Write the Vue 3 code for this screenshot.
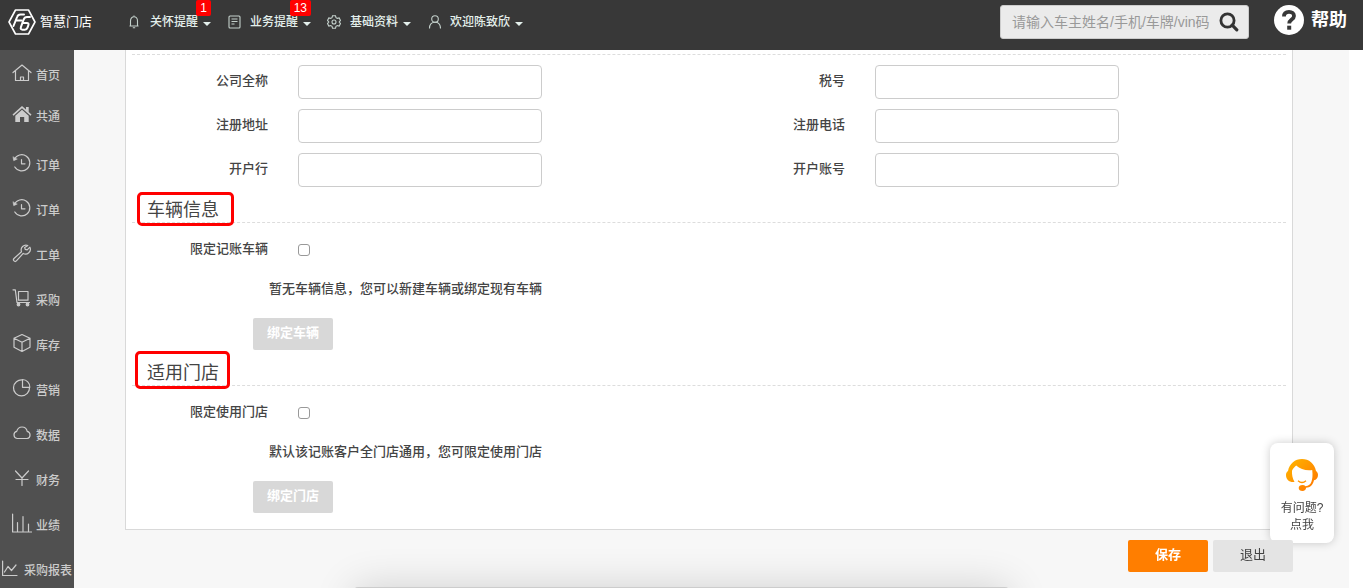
<script setup>
import { ref } from 'vue'

const navItems = [
  { icon: 'bell', label: '关怀提醒', badge: '1' },
  { icon: 'doc', label: '业务提醒', badge: '13' },
  { icon: 'gear', label: '基础资料' },
  { icon: 'user', label: '欢迎陈致欣' },
]

const menu = [
  { icon: 'home', label: '首页', compact: true },
  { icon: 'homeSolid', label: '共通', compact: true, last: true },
  { icon: 'clock', label: '订单' },
  { icon: 'clock', label: '订单' },
  { icon: 'wrench', label: '工单' },
  { icon: 'cart', label: '采购' },
  { icon: 'box', label: '库存' },
  { icon: 'pie', label: '营销' },
  { icon: 'cloud', label: '数据' },
  { icon: 'yen', label: '财务' },
  { icon: 'bars', label: '业绩' },
  { icon: 'chart', label: '采购报表' },
]

const fields = ref([
  { id: 'company', label: '公司全称', value: '' },
  { id: 'tax', label: '税号', value: '' },
  { id: 'address', label: '注册地址', value: '' },
  { id: 'phone', label: '注册电话', value: '' },
  { id: 'bank', label: '开户行', value: '' },
  { id: 'account', label: '开户账号', value: '' },
])

const sections = ref([
  { id: 'vehicle', title: '车辆信息', limit: '限定记账车辆', checked: false, hint: '暂无车辆信息，您可以新建车辆或绑定现有车辆', action: '绑定车辆' },
  { id: 'store', title: '适用门店', limit: '限定使用门店', checked: false, hint: '默认该记账客户全门店通用，您可限定使用门店', action: '绑定门店' },
])

const keyword = ref('')
</script>

<template>
  <div class="app">
    <header class="topbar">
      <a class="logo" href="#">
        <svg width="28" height="26" viewBox="0 0 28 26" fill="none" stroke="#fff" stroke-linejoin="round" stroke-linecap="round">
          <path d="M7.500 1h13L27 13l-6.500 12h-13L1 13z" stroke-width="1.600" />
          <path d="M16 5.500h-3.500q-2.500 0-3.400 2.500L5.500 17M8 11.500h5.500" stroke-width="2" />
          <path d="M22 8h-3q-2.500 0-3.500 2.800l-2.600 7.400q-.8 2.500 1.600 2.500h2.300q2 0 2.700-2l.9-2.500q.7-2.200-1.500-2.200H15" stroke-width="2" />
        </svg>
        <span>智慧门店</span>
      </a>
      <nav class="nav">
        <a v-for="item in navItems" :key="item.label" class="nav-item" href="#">
          <svg class="nav-icon" width="14" height="14" viewBox="0 0 14 14" fill="none" stroke="currentColor" stroke-width="1.100">
            <path v-if="item.icon === 'bell'" d="M7 .5v1M2.500 11h9M3.500 11V6a3.500 4.300 0 0 1 7 0v5M5.800 12.700h2.400" />
            <template v-else-if="item.icon === 'doc'">
              <rect x="2" y="1" width="11" height="12" rx="1" />
              <path d="M4.500 4h6M4.500 6.500h6M4.500 9h3" />
            </template>
            <template v-else-if="item.icon === 'gear'">
              <path d="M5.500.8h3l.5 1.900 1.300.7 1.900-.5 1.300 2.500L12.200 7l1.300 1.600-1.300 2.500-1.900-.5-1.300.7-.5 1.900h-3L5 11.300l-1.300-.7-1.900.5L.5 8.600 1.800 7 .5 5.400l1.300-2.500 1.900.5L5 2.700z" />
              <circle cx="7" cy="7" r="2" />
            </template>
            <template v-else>
              <circle cx="8" cy="4" r="3.300" />
              <path d="M2.500 13.500c0-3.800 2.200-6.200 5.500-6.200s5.500 2.400 5.500 6.200" />
            </template>
          </svg>
          <span class="nav-label">{{ item.label }}</span>
          <i class="caret"></i>
          <b v-if="item.badge" class="badge">{{ item.badge }}</b>
        </a>
      </nav>
      <form class="search" role="search" @submit.prevent>
        <input v-model="keyword" type="text" aria-label="搜索" placeholder="请输入车主姓名/手机/车牌/vin码" />
        <button type="submit" aria-label="搜索">
          <svg width="20" height="20" viewBox="0 0 20 20" fill="none" stroke="#333" stroke-width="2.800">
            <circle cx="8.500" cy="8.500" r="6.600" />
            <path d="M13.200 13.200l4.600 4.600" stroke-width="3.200" stroke-linecap="round" />
          </svg>
        </button>
      </form>
      <a class="help" href="#">
        <svg width="30" height="30" viewBox="0 0 30 30">
          <circle cx="15" cy="15" r="15" fill="#fff" />
          <path d="M10 11.500c0-3 2-4.700 5-4.700s5 1.700 5 4.200c0 3.500-4.800 3.600-4.800 7.500" fill="none" stroke="#383838" stroke-width="3.800" />
          <rect x="13.200" y="20.700" width="4" height="4" fill="#383838" />
        </svg>
        <span>帮助</span>
      </a>
    </header>

    <div class="body">
      <aside class="sidebar">
        <a v-for="(item, i) in menu" :key="i" href="#" class="menu-item" :class="{ compact: item.compact, last: item.last }">
          <svg width="20" height="20" viewBox="0 0 20 20" fill="none" stroke="currentColor" stroke-width="1.200" stroke-linejoin="round" stroke-linecap="round">
            <path v-if="item.icon === 'home'" d="M1 9.500L10 2l9 7.500M3.500 8v9.500h13V8M8.500 17.500V14h3v3.500" />
            <g v-else-if="item.icon === 'homeSolid'" fill="currentColor" stroke="none">
              <path d="M10 2l4 3.500V3h2.700v5L19.500 10.500l-1 1.200L10 4.300l-8.500 7.400-1-1.200z" />
              <path d="M10 5.800l6.700 5.900V18h-4.500v-5H8v5H3.300v-6.300z" />
            </g>
            <g v-else-if="item.icon === 'clock'">
              <path d="M2.300 6.500A8.100 8.100 0 1 1 2.800 14M9.500 6.500v4.300H13" />
              <path d="M1 4l.7 3.700 3.300-1.500z" fill="currentColor" stroke-width=".5" />
            </g>
            <path v-else-if="item.icon === 'wrench'" d="M15.800 2.500a4.800 4.800 0 0 0-6.300 6.200L2 15.500a1.600 1.600 0 0 0 2.400 2.400l6.800-7.500a4.800 4.800 0 0 0 6.700-6.200l-2.700 2.700-2-.5-.5-1.900z" />
            <g v-else-if="item.icon === 'cart'">
              <path d="M1 1.800h2.300L5 14.500h12.500M6.500 3.500H16v8.700H6.500z" />
              <circle cx="6.500" cy="16.500" r="1.300" fill="currentColor" />
              <circle cx="15.500" cy="16.500" r="1.300" fill="currentColor" />
            </g>
            <path v-else-if="item.icon === 'box'" d="M10 1.500l8 3.700v9L10 18.500l-8-4.300v-9zM2 5.200l8 4 8-4M10 9.200v9.300" />
            <g v-else-if="item.icon === 'pie'">
              <path d="M10.500 2A8 8 0 1 0 17.500 9.500M10.500 1.500v7.800h7.300a7.500 7.500 0 0 0-7.300-7.800" />
            </g>
            <path v-else-if="item.icon === 'cloud'" d="M5 15.500a3.700 3.700 0 0 1-.3-7.200C5.500 5.500 7.500 4 10 4s4.700 1.700 5.200 4.300a3.700 3.700 0 0 1 0 7.200z" />
            <path v-else-if="item.icon === 'yen'" d="M3.500 3l6.500 7 6.500-7M4 11.500h12M10 10v7.500" />
            <path v-else-if="item.icon === 'bars'" d="M.6 1v18h19M5.500 18V9.500M11 18V3.500M16.500 18v-7" />
            <path v-else d="M2.600 3v14.500H17M4.500 14l3.500-5.500 3.500 4L16 7" />
          </svg>
          <span>{{ item.label }}</span>
        </a>
      </aside>

      <main class="main">
        <section class="panel">
          <div class="fields">
            <div v-for="field in fields" :key="field.id" class="field">
              <label :for="field.id">{{ field.label }}</label>
              <input :id="field.id" v-model="field.value" type="text" />
            </div>
          </div>
          <div v-for="section in sections" :key="section.id" class="section">
            <h2 :class="section.id">{{ section.title }}</h2>
            <div class="limit">
              <label :for="section.id">{{ section.limit }}</label>
              <input :id="section.id" v-model="section.checked" type="checkbox" />
            </div>
            <p>{{ section.hint }}</p>
            <button type="button" class="bind" disabled>{{ section.action }}</button>
          </div>
        </section>
        <div class="actions">
          <button type="button" class="save">保存</button>
          <button type="button" class="exit">退出</button>
        </div>
      </main>
    </div>

    <a class="service" href="#">
      <svg width="34" height="34" viewBox="0 0 34 34">
        <defs>
          <linearGradient id="service-fill" x1="0" y1="0" x2="1" y2="1">
            <stop offset="0" stop-color="#ffb800" />
            <stop offset="1" stop-color="#ff7200" />
          </linearGradient>
        </defs>
        <path fill="url(#service-fill)" d="M3 13C4.500 5.500 10 1 17 1s12.500 4.500 14 12c1.300 1 2 2.400 2 4 0 2.700-1.700 4.800-4 5.300-1.500 5.500-4 7.200-8 7.500.2 2-1.500 3.200-3.500 3.200-2.300 0-3.800-1.200-3.800-3s1.500-3 3.800-3c1.300 0 2.300.4 3 1.200 3.300-.3 5-1.700 6-4.700.9-2.500 1.400-6 .7-11.500-6 .7-12-.5-16-4.500-1.500 1-3.200 3-4.200 5.200-.2 4 .5 7.500 2.500 11.300C4 24.500 1 21.500 1 17c0-1.600.7-3 2-4z" />
        <path d="M13 22.800q4 3.500 8 0" fill="none" stroke="#ff9500" stroke-width="1.300" />
      </svg>
      <span>有问题?</span>
      <span>点我</span>
    </a>
    <div class="drawer-edge"></div>
  </div>
</template>

<style>
body {
  margin: 0;
  background: #fff;
}
</style>

<style scoped>
.app {
  display: flex;
  flex-direction: column;
  height: 100vh;
  overflow: hidden;
  font-family: "Liberation Sans", "Noto Sans CJK SC", sans-serif;
  font-size: 13px;
  color: #444;
}
.app *,
.app *::after {
  box-sizing: border-box;
}
a {
  color: inherit;
  text-decoration: none;
}
svg {
  display: block;
  flex: none;
}
button,
input {
  font: inherit;
  margin: 0;
}
.topbar {
  display: flex;
  flex: none;
  height: 50px;
  padding: 0 16px 0 8px;
  background: #383838;
  color: #fff;
}
.logo {
  display: flex;
  align-items: center;
  gap: 4px;
  width: 119px;
  height: 43px;
  font-size: 13px;
  line-height: 20px;
}
.nav {
  display: flex;
  flex: 1;
  gap: 16px;
}
.nav-item {
  position: relative;
  display: flex;
  align-items: center;
  height: 44px;
  font-size: 12px;
  font-weight: 500;
  line-height: 16px;
  color: #e4f0ec;
  white-space: nowrap;
}
.nav-icon {
  margin-right: 9px;
  color: #c3d0cb;
}
.caret {
  margin: 4px 0 0 5px;
  border: 4px solid transparent;
  border-top-color: #e4f0ec;
  border-bottom: 0;
}
.badge {
  position: absolute;
  top: 0;
  right: 0;
  padding: 0 4px;
  border-radius: 2px;
  background: #f00;
  color: #fff;
  font-size: 12px;
  font-weight: 400;
  line-height: 16px;
}
.search {
  display: flex;
  width: 249px;
  height: 34px;
  margin-top: 5px;
  border: 1px solid #ccc;
  border-radius: 3px;
  background: #ebebeb;
}
.search input {
  flex: 1;
  min-width: 0;
  padding: 0 0 0 11px;
  border: 0;
  background: none;
  font-size: 14px;
  outline: 0;
}
.search input::placeholder {
  color: #999;
}
.search button {
  display: flex;
  align-items: center;
  justify-content: center;
  width: 38px;
  padding: 0;
  border: 0;
  background: none;
}
.help {
  display: flex;
  align-items: center;
  gap: 7px;
  height: 40px;
  margin-left: 25px;
  font-size: 18px;
  font-weight: 700;
  line-height: 24px;
}
.body {
  display: flex;
  flex: 1;
  min-height: 0;
}
.sidebar {
  flex: none;
  width: 74px;
  padding-top: 4px;
  overflow: hidden;
  background: #505050;
  color: #ccc;
}
.menu-item {
  display: flex;
  align-items: center;
  justify-content: center;
  gap: 4px;
  height: 45px;
  padding-right: 2px;
  font-size: 12px;
  font-weight: 500;
  line-height: 16px;
  white-space: nowrap;
}
.menu-item svg {
  margin-bottom: 4px;
}
.menu-item span {
  padding-top: 2px;
}
.menu-item.compact {
  height: 41px;
}
.menu-item.last {
  margin-bottom: 6px;
}
.main {
  flex: 1;
  min-width: 0;
  margin-right: 14px;
  padding: 0 56px 0 51px;
  overflow: hidden;
  background: #f7f7f7;
}
.panel {
  padding: 4px 6px 16px;
  border: 1px solid #d9d9d9;
  border-top: 0;
  background: #fff;
}
.fields {
  display: grid;
  grid-template-columns: 1fr 1fr;
  gap: 10px 0;
  padding-top: 10px;
  border-top: 1px dashed #ddd;
}
.field,
.limit {
  display: flex;
  align-items: center;
  gap: 30px;
  height: 34px;
}
.field label,
.limit label {
  width: 136px;
  text-align: right;
  font-weight: 500;
  line-height: 32px;
  padding-bottom: 2px;
}
.field input {
  width: 244px;
  height: 34px;
  padding: 0 10px;
  border: 1px solid #ccc;
  border-radius: 4px;
  background: #fff;
}
.section h2 {
  position: relative;
  margin: 0 0 10px;
  padding: 12px 15px 0;
  border-bottom: 1px dashed #ddd;
  font-size: 18px;
  font-weight: 400;
  line-height: 23px;
}
.section h2::after {
  content: "";
  position: absolute;
  border: 3px solid #f00;
  border-radius: 5px;
}
.section h2.vehicle::after {
  top: 5px;
  left: 5px;
  width: 97px;
  height: 34px;
}
.section h2.store::after {
  top: 1px;
  left: 3px;
  width: 95px;
  height: 38px;
}
.limit input {
  width: 12px;
  height: 12px;
  appearance: none;
  border: 1px solid #999;
  border-radius: 3px;
  background: #fff;
}
.limit input:checked {
  background: #ff7e00;
}
.section p {
  margin: 2px 0 9px 137px;
  font-weight: 500;
  line-height: 40px;
}
.bind,
.save,
.exit {
  display: block;
  width: 80px;
  height: 32px;
  padding: 0 0 2px;
  border: 0;
  border-radius: 2px;
  line-height: 30px;
}
.bind {
  margin-left: 121px;
  background: #d8d8d8;
  color: #fff;
  font-weight: 700;
}
.actions {
  position: relative;
  z-index: 2;
  display: flex;
  justify-content: flex-end;
  gap: 5px;
  margin-top: 10px;
}
.save {
  background: #ff7e00;
  color: #fff;
  font-weight: 700;
}
.exit {
  background: #e4e4e4;
  color: #444;
}
.service {
  position: fixed;
  right: 29px;
  bottom: 45px;
  z-index: 1;
  display: flex;
  flex-direction: column;
  align-items: center;
  width: 64px;
  height: 100px;
  padding-top: 15px;
  border-radius: 8px;
  background: #fff;
  box-shadow: 0 0 10px rgba(0, 0, 0, 0.2);
  font-size: 12px;
  line-height: 17px;
}
.service svg {
  margin-bottom: 8px;
}
.drawer-edge {
  position: fixed;
  top: calc(100vh - 1px);
  left: 26%;
  right: 26%;
  height: 100px;
  border-radius: 4px;
  background: #ccc;
  box-shadow: 0 0 40px rgba(0, 0, 0, 0.16);
}
</style>
